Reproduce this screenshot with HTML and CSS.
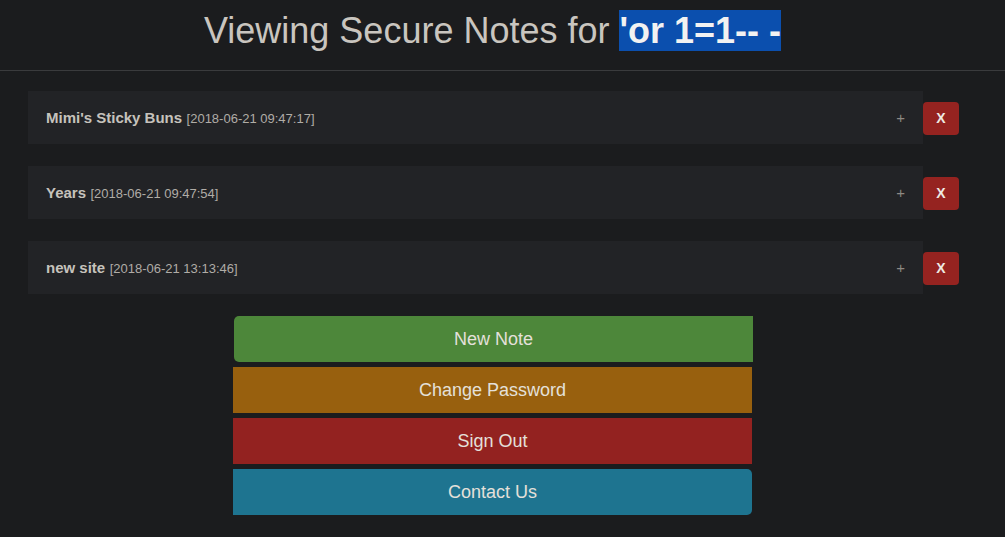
FILE: index.html
```html
<!DOCTYPE html>
<html>
<head>
<meta charset="utf-8">
<link rel="stylesheet" href="styles.css">
</head>
<body>
<header class="header">
  <div class="page">
    <h1 class="title">Viewing Secure Notes for <span class="hl">'or 1=1-- -</span></h1>
  </div>
</header>
<div class="page">
  <div class="notes">
    <div class="note-row">
      <div class="note"><span class="note-text"><span class="note-title">Mimi's Sticky Buns</span> <span class="note-date">[2018-06-21 09:47:17]</span></span><span class="plus">+</span></div>
      <button class="del">X</button>
    </div>
    <div class="note-row">
      <div class="note"><span class="note-text"><span class="note-title">Years</span> <span class="note-date">[2018-06-21 09:47:54]</span></span><span class="plus">+</span></div>
      <button class="del">X</button>
    </div>
    <div class="note-row">
      <div class="note"><span class="note-text"><span class="note-title">new site</span> <span class="note-date">[2018-06-21 13:13:46]</span></span><span class="plus">+</span></div>
      <button class="del">X</button>
    </div>
  </div>
  <div class="actions">
    <button class="act green first">New Note</button>
    <button class="act orange">Change Password</button>
    <button class="act red">Sign Out</button>
    <button class="act teal last">Contact Us</button>
  </div>
</div>
</body>
</html>
```
FILE: styles.css
```css
html, body {
  margin: 0;
  padding: 0;
  background: #1b1c1e;
  font-family: "Liberation Sans", Arial, sans-serif;
}
.page {
  width: 985px;
}
.header {
  height: 70px;
  border-bottom: 1px solid #3a3b3d;
}
.title {
  margin: 0;
  padding-top: 10px;
  text-align: center;
  font-size: 36px;
  font-weight: normal;
  line-height: normal;
  color: #c9c5bf;
}
.hl {
  background: #0b4fae;
  color: #f2f2f2;
  font-weight: bold;
}
.notes {
  padding: 20px 26px 0 28px;
  display: flex;
  flex-direction: column;
  gap: 22px;
}
.note-row {
  display: flex;
  align-items: center;
}
.note {
  width: 895px;
  height: 53px;
  box-sizing: border-box;
  background: #222326;
  display: flex;
  align-items: center;
  padding: 0 18px;
}
.note-text {
  white-space: pre;
}
.note-title {
  font-size: 15px;
  font-weight: bold;
  color: #c6c2bc;
}
.note-date {
  font-size: 13px;
  color: #b0aca6;
}
.plus {
  margin-left: auto;
  font-size: 15px;
  color: #8d8983;
}
.del {
  width: 36px;
  height: 33px;
  margin-top: 1px;
  border: none;
  border-radius: 4px;
  background: #952320;
  color: #eeeae4;
  font-family: "Liberation Sans", Arial, sans-serif;
  font-weight: bold;
  font-size: 14px;
  padding: 0;
}
.actions {
  width: 519px;
  margin: 22px auto 0;
  display: flex;
  flex-direction: column;
  gap: 5px;
}
.act {
  height: 46px;
  border: none;
  font-family: "Liberation Sans", Arial, sans-serif;
  font-size: 18px;
  color: #e4e0da;
  border-radius: 0;
  padding: 0;
}
.green { background: #4d873a; margin-left: 1px; margin-right: -1px; }
.orange { background: #98600e; }
.red { background: #932220; }
.teal { background: #1e7490; }
.first { border-radius: 5px 0 0 5px; }
.last { border-radius: 0 5px 5px 0; }
```
